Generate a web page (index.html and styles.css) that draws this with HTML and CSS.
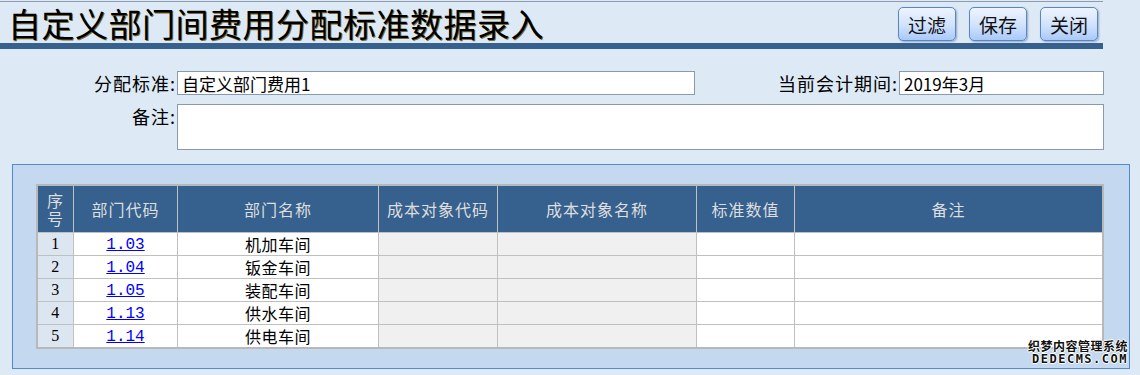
FILE: index.html
```html
<!DOCTYPE html>
<html>
<head>
  <meta charset="UTF-8">
  <title>自定义部门间费用分配标准数据录入</title>
  <link rel="stylesheet" href="styles.css">
</head>
<body>
  <div class="page">
    <!-- 标题栏 -->
    <div class="top">
      <h1>自定义部门间费用分配标准数据录入</h1>
      <div class="btns">
        <button class="btn">过滤</button>
        <button class="btn">保存</button>
        <button class="btn">关闭</button>
      </div>
    </div>

    <!-- 表头信息 -->
    <div class="form">
      <label class="lab">分配标准:</label>
      <input class="ipt" type="text" value="自定义部门费用1">
      <label class="lab">当前会计期间:</label>
      <input class="ipt" type="text" value="2019年3月">
      <label class="lab">备注:</label>
      <textarea class="memo"></textarea>
    </div>

    <!-- 明细 -->
    <div class="panel">
      <table class="grid">
        <thead>
          <tr>
            <th class="c1"><span class="ln">序</span><span class="ln">号</span></th>
            <th class="c2">部门代码</th>
            <th class="c3">部门名称</th>
            <th class="c4">成本对象代码</th>
            <th class="c5">成本对象名称</th>
            <th class="c6">标准数值</th>
            <th class="c7">备注</th>
          </tr>
        </thead>
        <tbody>
          <tr><td class="no">1</td><td><a href="#">1.03</a></td><td>机加车间</td><td class="ro"></td><td class="ro"></td><td></td><td></td></tr>
          <tr><td class="no">2</td><td><a href="#">1.04</a></td><td>钣金车间</td><td class="ro"></td><td class="ro"></td><td></td><td></td></tr>
          <tr><td class="no">3</td><td><a href="#">1.05</a></td><td>装配车间</td><td class="ro"></td><td class="ro"></td><td></td><td></td></tr>
          <tr><td class="no">4</td><td><a href="#">1.13</a></td><td>供水车间</td><td class="ro"></td><td class="ro"></td><td></td><td></td></tr>
          <tr><td class="no">5</td><td><a href="#">1.14</a></td><td>供电车间</td><td class="ro"></td><td class="ro"></td><td></td><td></td></tr>
        </tbody>
      </table>
      <div class="mark">
        <span class="mark-cn">织梦内容管理系统</span>
        <span class="mark-en">DEDECMS.COM</span>
      </div>
    </div>
  </div>
</body>
</html>
```

FILE: styles.css
```css
html, body {
  margin: 0;
  padding: 0;
  background: #dde9f5;
}
body {
  font-family: "Noto Sans CJK SC", "Liberation Sans", sans-serif;
  color: #000;
}
.page {
  width: 1140px;
  height: 375px;
  padding-top: 1px;
  box-sizing: border-box;
  overflow: hidden;
}
.top {
  width: 1103px;
  height: 41px;
  border-top: 1px solid #8c9bb0;
  border-bottom: 6px solid #36618f;
  display: flex;
  justify-content: space-between;
  align-items: flex-start;
}
.top h1 {
  margin: 1px 0 0 8px;
  font-size: 33px;
  font-weight: normal;
  line-height: 40px;
  letter-spacing: 0.5px;
  color: #000;
  text-shadow: 1px 1px 0 #7a6a30;
}
.btns {
  display: flex;
  gap: 13px;
  margin: 5px 5px 0 0;
}
.btn {
  width: 58px;
  height: 34px;
  padding: 0;
  border: 1px solid #5a86c4;
  border-radius: 5px;
  background: linear-gradient(#eef4fe, #d0e2fc 55%, #a9c9fa);
  box-shadow: 1px 1px 2px rgba(60, 90, 140, 0.45);
  font-family: "Noto Sans CJK SC", sans-serif;
  font-size: 19px;
  color: #111;
}

.form {
  margin-top: 22px;
  width: 1104px;
  display: grid;
  grid-template-columns: 177px 518px 204px 205px;
  row-gap: 9px;
}
.lab {
  text-align: right;
  padding-right: 1px;
  font-size: 18px;
  line-height: 24px;
  letter-spacing: 1px;
}
.ipt {
  box-sizing: border-box;
  height: 24px;
  margin: 0;
  padding: 0 4px;
  border: 1px solid #8a9aac;
  background: #fff;
  font-family: "Noto Sans CJK SC", sans-serif;
  font-size: 17px;
  color: #000;
}
.memo {
  grid-column: 2 / 5;
  box-sizing: border-box;
  height: 46px;
  margin: 0;
  border: 1px solid #8a9aac;
  resize: none;
  background: #fff;
}

.panel {
  position: relative;
  box-sizing: border-box;
  width: 1118px;
  height: 205px;
  margin: 14px 0 0 12px;
  padding: 19px 25px 0 23px;
  background: #c4d9ef;
  border: 1px solid #4f8ad8;
}
.grid {
  width: 1068px;
  border-collapse: collapse;
  border: 2px solid #b8b8b8;
  background: #fff;
  font-size: 16px;
  table-layout: fixed;
}
.grid th {
  height: 46px;
  padding: 0;
  background: #36618f;
  color: #dedede;
  font-weight: normal;
  line-height: 19px;
  letter-spacing: 1px;
  border: 1px solid #c0c0c0;
}
.grid th .ln {
  display: block;
  height: 18px;
  line-height: 18px;
}
.grid td {
  height: 22px;
  padding: 0;
  border: 1px solid #c0c0c0;
  text-align: center;
  line-height: 22px;
  letter-spacing: 0.5px;
}
.grid .c1 { width: 35px; }
.grid .c2 { width: 103px; }
.grid .c3 { width: 200px; }
.grid .c4 { width: 118px; }
.grid .c5 { width: 198px; }
.grid .c6 { width: 97px; }
.grid td.no {
  background: #dce6f0;
  font-family: "Liberation Serif", serif;
}
.grid td.ro {
  background: #f0f0f0;
}
.grid a {
  display: inline-block;
  vertical-align: top;
  height: 22px;
  line-height: 22px;
  padding-top: 1px;
  box-sizing: border-box;
  color: #0000ff;
  font-family: "Liberation Mono", monospace;
  font-size: 16px;
  letter-spacing: 0;
}

.mark {
  position: absolute;
  right: 1px;
  bottom: 3px;
  display: flex;
  flex-direction: column;
  align-items: flex-end;
  gap: 1px;
  font-weight: bold;
  color: #111;
  text-shadow: 1px 0 0 #fff, -1px 0 0 #fff, 0 1px 0 #fff, 0 -1px 0 #fff;
}
.mark-cn {
  font-size: 12px;
  line-height: 13px;
  letter-spacing: 0.5px;
}
.mark-en {
  font-family: "DejaVu Sans Mono", monospace;
  font-size: 12px;
  line-height: 12px;
  letter-spacing: 1.5px;
}
```
